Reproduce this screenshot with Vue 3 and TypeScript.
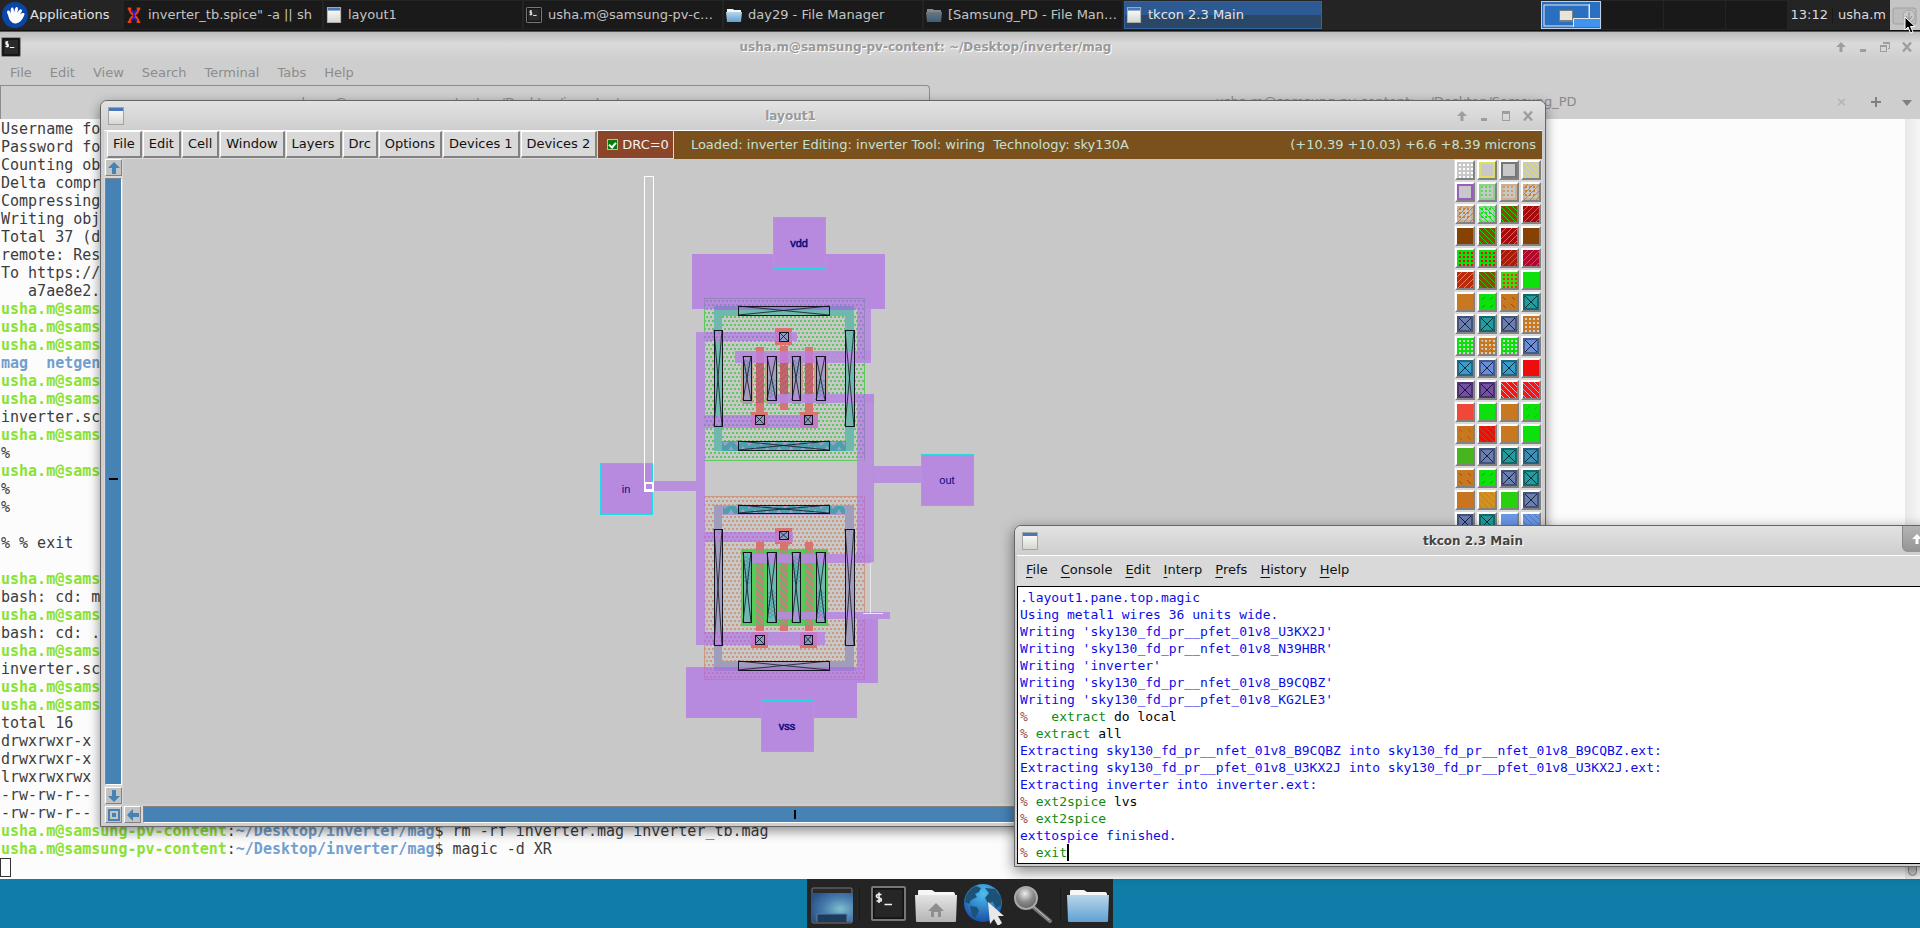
<script setup lang="ts">
interface Span { t: string; c?: string }
interface Swatch { base: string; kind: string; ink: string; frame: string }
interface Task { label: string; icon: string; state: string }

const prompt = 'usha.m@sams'
const host = 'usha.m@samsung-pv-content'
const cwd = '~/Desktop/inverter/mag'

const g = (t: string): Span[] => [{ t, c: 'user' }]
const p = (t: string): Span[] => [{ t }]
const cmd = (t: string): Span[] => [{ t: host, c: 'user' }, { t: ':' }, { t: cwd, c: 'path' }, { t: '$ ' + t }]

const termLines: Span[][] = [
  p('Username fo'), p('Password fo'), p('Counting ob'), p('Delta compr'), p('Compressing'),
  p('Writing obj'), p('Total 37 (d'), p('remote: Res'), p('To https://'), p('   a7ae8e2.'),
  g(prompt), g(prompt), g(prompt), [{ t: 'mag  netgen', c: 'path' }], g(prompt), g(prompt),
  p('inverter.sc'), g(prompt), p('%'), g(prompt), p('%'), p('%'), p(' '), p('% % exit'), p(' '),
  g(prompt), p('bash: cd: m'), g(prompt), p('bash: cd: .'), g(prompt), p('inverter.sc'),
  g(prompt), g(prompt), p('total 16'), p('drwxrwxr-x'), p('drwxrwxr-x'), p('lrwxrwxrwx'),
  p('-rw-rw-r--'), p('-rw-rw-r--'),
  cmd('rm -rf inverter.mag inverter_tb.mag'), cmd('magic -d XR'),
]

const out = (t: string): Span[] => [{ t, c: 'out' }]
const run = (word: string, rest = '', pad = ' '): Span[] => [{ t: '%', c: 'pct' }, { t: pad + word, c: 'cmd' }, { t: rest }]
const conLines: Span[][] = [
  out('.layout1.pane.top.magic'),
  out('Using metal1 wires 36 units wide.'),
  out("Writing 'sky130_fd_pr__pfet_01v8_U3KX2J'"),
  out("Writing 'sky130_fd_pr__nfet_01v8_N39HBR'"),
  out("Writing 'inverter'"),
  out("Writing 'sky130_fd_pr__nfet_01v8_B9CQBZ'"),
  out("Writing 'sky130_fd_pr__pfet_01v8_KG2LE3'"),
  run('extract', ' do local', '   '),
  run('extract', ' all'),
  out('Extracting sky130_fd_pr__nfet_01v8_B9CQBZ into sky130_fd_pr__nfet_01v8_B9CQBZ.ext:'),
  out('Extracting sky130_fd_pr__pfet_01v8_U3KX2J into sky130_fd_pr__pfet_01v8_U3KX2J.ext:'),
  out('Extracting inverter into inverter.ext:'),
  run('ext2spice', ' lvs'),
  run('ext2spice'),
  out('exttospice finished.'),
  run('exit'),
]

const tasks: Task[] = [
  { label: 'inverter_tb.spice" -a || sh', icon: 'i-xschem', state: '' },
  { label: 'layout1', icon: 'i-win', state: '' },
  { label: 'usha.m@samsung-pv-c…', icon: 'i-term', state: '' },
  { label: 'day29 - File Manager', icon: 'i-folder', state: '' },
  { label: '[Samsung_PD - File Man…', icon: 'i-folder', state: 'minimized' },
  { label: 'tkcon 2.3 Main', icon: 'i-win', state: 'active' },
]

const termMenu = ['File', 'Edit', 'View', 'Search', 'Terminal', 'Tabs', 'Help']
const magicMenu = ['File', 'Edit', 'Cell', 'Window', 'Layers', 'Drc', 'Options', 'Devices 1', 'Devices 2']
const conMenu = ['File', 'Console', 'Edit', 'Interp', 'Prefs', 'History', 'Help']

const dots = [0, 1, 2, 3].flatMap(r => [0, 1, 2, 3].map(c => `M${2 + c * 4} ${2 + r * 4}h2v2h-2z`)).join('')
const strokes: Record<string, string> = {
  fwd: 'M0 5L5 0M0 11L11 0M1 16L16 1M7 16L16 7M13 16L16 13',
  back: 'M11 0L16 5M5 0L16 11M0 1L15 16M0 7L9 16M0 13L3 16',
  dfwd: 'M3 6L6 3M11 6L14 3M3 14L6 11M11 14L14 11',
  dback: 'M2 3L5 6M11 3L14 6M2 11L5 14M10 10L14 14',
  x: 'M2 2L14 14M14 2L2 14',
}
const s = (base: string, kind = '', ink = '', frame = ''): Swatch => ({ base, kind, ink, frame })
const G = '#0de00d', O = '#c87820', R = '#ee0c0c', B = '#6a7fb0', T = '#229c9c', K = '#c8c8c8', W = '#854203'
const swatches: Swatch[] = [
  s(K, 'dots', '#fff'), s(K, '', '', '#dede66'), s(K, '', '', '#777'), s(K, 'back', '#e0dc6a'),
  s(K, '', '', '#9a5cc0'), s(K, 'dots', '#5cd85c', '#8fd08f'), s(K, 'dots', '#d09a60', '#ccb090'), s(K, 'dots fwd', '#cc8030', '#ccb090'),
  s(K, 'dots fwd', '#cc8030', '#ccb090'), s(K, 'dots back', '#0de01d', '#8fd08f'), s('#8c4806', 'back', G), s('#a60c0c', 'fwd', '#c86c20'),
  s(W), s('#8c4806', 'back', G), s('#a60c0c', 'fwd', '#d08020'), s(W),
  s(G, 'dots', R), s(G, 'dots dfwd', R), s('#a81c0c', 'fwd', '#c06420'), s('#b0082c', 'fwd', '#d0504c'),
  s('#b82c0c', 'fwd', '#e09020'), s('#8c4806', 'back', '#30c010'), s('#40d810', 'dots', '#f03010'), s(G),
  s(O), s(G, 'dfwd', '#806010'), s(O, 'dback', '#904c08'), s(T, 'x', '#0a2a34'),
  s(B, 'x', '#18203c'), s(T, 'x', '#0a2a34'), s(B, 'x', '#18203c'), s(O, 'dots', '#d4d0c8'),
  s(G, 'dots', '#d0d4d0'), s(O, 'dots dback', '#d4d0c8'), s(G, 'dots dfwd', '#d0d4d0'), s('#6a8fd8', 'x', '#18203c'),
  s('#3a9cc8', 'x', '#0a2a34'), s('#6a8fd8', 'x', '#18203c'), s('#3a9cc8', 'x', '#0a2a34'), s(R),
  s('#7450a0', 'x', '#20103c'), s('#7450a0', 'x', '#20103c'), s('#fa1410', 'back', '#d0b8c0'), s('#fa1410', 'back', '#b8a0c8'),
  s('#f04838'), s(G), s(O), s(G, 'dfwd', '#18b818'),
  s(O, 'dback', '#a86018'), s(R, 'back', '#c04820'), s(O), s(G),
  s('#48b420', 'fwd', '#20c818'), s(B, 'x', '#18203c'), s(T, 'x', '#0a2a34'), s('#3a90b8', 'x', '#0a2a34'),
  s(O, 'dback', '#904c08'), s(G, 'dfwd', '#806010'), s(B, 'x', '#18203c'), s(T, 'x', '#0a2a34'),
  s('#c87420'), s('#d49020', 'back', '#c08018'), s('#28d010'), s(B, 'x', '#18203c'),
  s(B, 'x', '#18203c'), s(T, 'x', '#0a2a34'), s('#6a98e8'), s('#6a98e8', 'back', '#5078c0'),
]
const strokeKind = (k: string): string => k.split(' ').filter(x => x !== 'dots').map(x => strokes[x] ?? '').join('')

type Box = [number, number, number, number]
const metal: Box[] = [
  [692, 254, 193, 55], [857, 309, 14, 51], [735, 351, 136, 12], [857, 394, 17, 168], [770, 394, 104, 9],
  [873, 466, 48, 17], [652, 481, 44, 10], [696, 332, 9, 313], [705, 332, 92, 9], [705, 415, 113, 13],
  [705, 532, 88, 10], [705, 632, 120, 13], [752, 554, 119, 9], [777, 612, 113, 7],
  [857, 619, 21, 64], [686, 667, 171, 51],
]
const nwellOver: Box[] = [[704, 298, 160, 11], [857, 309, 7, 51], [857, 394, 7, 66], [704, 332, 75, 9], [704, 415, 48, 13], [768, 415, 32, 13]]
const pwellOver: Box[] = [[704, 667, 160, 12], [857, 496, 7, 66], [857, 619, 7, 48], [704, 532, 72, 10], [704, 632, 48, 13]]
const contacts: Box[] = [
  [738, 306, 91, 9], [738, 441, 91, 9], [714, 330, 8, 96], [845, 330, 9, 96],
  [738, 505, 91, 8], [738, 661, 91, 9], [714, 529, 8, 116], [845, 529, 9, 116],
  [743, 356, 8, 44], [767, 356, 9, 44], [792, 356, 8, 44], [816, 356, 9, 44],
  [743, 552, 8, 70], [767, 552, 9, 70], [792, 552, 8, 70], [816, 552, 9, 70],
  [779, 332, 9, 9], [755, 415, 9, 9], [804, 415, 8, 9],
  [779, 531, 9, 8], [755, 635, 9, 9], [804, 635, 8, 9],
]
const poly: Box[] = [
  [756, 347, 8, 65], [780, 346, 8, 64], [805, 347, 8, 65], [775, 328, 17, 17], [751, 412, 17, 16], [800, 412, 18, 16],
  [756, 542, 8, 89], [780, 544, 8, 87], [805, 542, 8, 89], [775, 528, 17, 16], [751, 632, 17, 16], [800, 632, 17, 16],
]
const ports = [
  { name: 'vdd', x: 773, y: 217, bold: true }, { name: 'in', x: 600, y: 463, bold: false },
  { name: 'out', x: 921, y: 454, bold: false }, { name: 'vss', x: 761, y: 700, bold: true },
]
const cross = (b: Box): string => `M${b[0]} ${b[1]}l${b[2]} ${b[3]}M${b[0] + b[2]} ${b[1]}l${-b[2]} ${b[3]}`
</script>

<template>
  <div class="desktop">
    <svg class="defs" width="0" height="0" aria-hidden="true">
      <defs>
        <linearGradient id="g-folder" x1="0" y1="0" x2="0" y2="1"><stop offset="0" stop-color="#b9d6ea" /><stop offset="1" stop-color="#5fa0d2" /></linearGradient>
        <linearGradient id="g-home" x1="0" y1="0" x2="0" y2="1"><stop offset="0" stop-color="#e4e4e4" /><stop offset="1" stop-color="#b4b4b4" /></linearGradient>
        <linearGradient id="g-win" x1="0" y1="0" x2="0" y2="1"><stop offset="0" stop-color="#fff" /><stop offset="1" stop-color="#d4d8d0" /></linearGradient>
        <radialGradient id="g-desk" cx=".7" cy=".55" r=".75"><stop offset="0" stop-color="#7fc0cc" /><stop offset=".5" stop-color="#4a80b0" /><stop offset="1" stop-color="#2c5288" /></radialGradient>
        <radialGradient id="g-globe" cx=".5" cy=".25" r=".8"><stop offset="0" stop-color="#4cc0ee" /><stop offset="1" stop-color="#1746a0" /></radialGradient>
        <radialGradient id="g-lens" cx=".45" cy=".3" r=".75"><stop offset="0" stop-color="#ececec" /><stop offset=".5" stop-color="#8c8c8c" /><stop offset="1" stop-color="#5a5a5a" /></radialGradient>
        <pattern id="p-nwell" width="4" height="8" patternUnits="userSpaceOnUse"><path d="M0 0h2v2h-2zM2 4h2v2h-2z" fill="#5cc95c" /></pattern>
        <pattern id="p-pwell" width="4" height="8" patternUnits="userSpaceOnUse"><path d="M0 0h2v2h-2zM2 4h2v2h-2z" fill="#cc9880" /></pattern>
        <pattern id="p-nover" width="4" height="8" patternUnits="userSpaceOnUse"><path d="M0 0h2v2h-2zM2 4h2v2h-2z" fill="#9684be" /></pattern>
        <pattern id="p-pover" width="4" height="8" patternUnits="userSpaceOnUse"><path d="M0 0h2v2h-2zM2 4h2v2h-2z" fill="#b878c6" /></pattern>
        <pattern id="p-tri" x="722" y="1" width="12" height="9" patternUnits="userSpaceOnUse"><path d="M0 0h7l-4 4zM6 9l3-5 3 5z" fill="#a49cc8" /></pattern>
        <pattern id="p-hatch" width="6" height="6" patternUnits="userSpaceOnUse"><path d="M0 6L6 0" stroke="#c87850" /></pattern>
        <pattern id="p-hatchg" width="8" height="8" patternUnits="userSpaceOnUse"><path d="M0 0L8 8" stroke="#50c850" /></pattern>
        <pattern id="p-cut" width="6" height="4" patternUnits="userSpaceOnUse"><path d="M0 1h4M3 3h3" stroke="#3c98b0" /></pattern>
      </defs>
      <symbol id="i-win" viewBox="0 0 16 18"><rect width="16" height="18" fill="#a4a4a4" /><rect x="1" y="1" width="14" height="16" fill="url(#g-win)" /><rect x="1" y="1" width="14" height="3" fill="#4a76b8" /></symbol>
      <symbol id="i-term" viewBox="0 0 18 18"><rect x=".5" y=".5" width="17" height="17" rx="1" fill="#1c1c1c" stroke="#8c8c8c" /><rect x="2" y="2" width="14" height="14" fill="#2a2a2a" stroke="#111" /><path d="M6.500 4.500H4.500V6.500H6.500V8.500H4M5.500 3.500V9.500M8 9.500H12" fill="none" stroke="#fff" /></symbol>
      <symbol id="i-folder" viewBox="0 0 16 16"><path d="M1 5V2h6l1 1h7v3z" fill="#f4f4f4" /><path d="M0 5h16l-1 10H1z" fill="url(#g-folder)" /></symbol>
      <symbol id="i-xschem" viewBox="0 0 16 18"><path d="M1 2h4M1 17h4M11 2h4M11 17h4M3 2Q3 6 8 9.500T13 17M13 2Q13 6 8 9.500T3 17" fill="none" stroke="#f23c10" stroke-width="2.600" /><path d="M5 4L8 6L11 4M5 15L8 12L11 15M8 6v7" fill="none" stroke="#2020e0" stroke-width="2" /></symbol>
      <symbol id="i-up" viewBox="0 0 12 12"><path d="M6 1L11 6H7.500V11H4.500V6H1z" /></symbol>
      <symbol id="i-min" viewBox="0 0 12 12"><path d="M3 8h6v3H3z" /></symbol>
      <symbol id="i-max" viewBox="0 0 12 12"><path d="M2 1h8v10H2zM3 4v6h6V4z" fill-rule="evenodd" /></symbol>
      <symbol id="i-restore" viewBox="0 0 12 12"><path d="M1 4h7v7H1zM2 6v4h5V6zM4 1h7v7H9V7h1V3H5V3H4z" fill-rule="evenodd" /></symbol>
      <symbol id="i-close" viewBox="0 0 12 12"><path d="M2 1.500L10 10.500M10 1.500L2 10.500" fill="none" stroke="currentColor" stroke-width="2.400" /></symbol>
      <symbol id="i-arrow" viewBox="0 0 14 14"><path d="M7 1L13 7H9V13H5V7H1z" fill="#4682b4" /></symbol>
    </svg>

    <header class="panel">
      <button class="apps">
        <svg width="26" height="26" viewBox="0 0 26 26"><circle cx="13" cy="13" r="13" fill="#0b45a8" /><path d="M6 13Q4 9 6 8.500T9 12Q8 6 10 5.500T12 11Q13 4 15 5T15 11Q18 6 19.500 7.500T18 12Q23 10 22.500 12.500Q20 20 14 21.500Q8 22 6 13z" fill="#fff" /></svg>
        <span>Applications</span>
      </button>
      <nav class="tasks">
        <button v-for="t in tasks" :key="t.label" class="task" :class="t.state">
          <svg width="16" height="16"><use :href="'#' + t.icon" /></svg>
          <span>{{ t.label }}</span>
        </button>
      </nav>
      <div class="pager">
        <button class="ws current" aria-label="Workspace 1">
          <svg width="60" height="27" viewBox="0 0 60 27"><rect x="3" y="3" width="45" height="21" fill="#2b70c0" stroke="#e8e8e8" /><path d="M48.500 2V17H59" fill="none" stroke="#e8e8e8" /><rect x="32" y="16" width="27" height="9" fill="#4094ee" /><path d="M32.500 25V16.500H59" fill="none" stroke="#e8e8e8" /><rect x="18" y="8" width="14" height="12" fill="#7c8078" /><rect x="19" y="9" width="12" height="9" fill="#e4e6de" /></svg>
        </button>
        <button class="ws" aria-label="Workspace 2"></button>
        <button class="ws" aria-label="Workspace 3"></button>
        <button class="ws" aria-label="Workspace 4"></button>
      </div>
      <span class="clock">13:12</span>
      <span class="who">usha.m</span>
      <button class="shot" aria-label="Screenshot">
        <svg width="26" height="24" viewBox="0 0 26 24"><rect x="1" y="5" width="23" height="16" rx="2" fill="#bcbcbc" stroke="#a0a0a0" /><circle cx="17" cy="13" r="6" fill="#c8c8c8" stroke="#a4a4a4" /><path d="M17 9v7M14 13l3 4 3-4" stroke="#8c8c8c" fill="none" /></svg>
      </button>
    </header>
    <svg class="cursor" width="12" height="18" viewBox="0 0 12 18"><path d="M1 1V14L4 11L6.500 17L9 16L6.500 10.500H11z" fill="#000" stroke="#fff" /></svg>

    <section class="win terminal">
      <div class="titlebar">
        <svg class="ticon" width="20" height="20"><use href="#i-term" /></svg>
        <h1>usha.m@samsung-pv-content: ~/Desktop/inverter/mag</h1>
        <div class="wbtns">
          <button aria-label="Shade"><svg width="12" height="12"><use href="#i-up" /></svg></button>
          <button aria-label="Minimize"><svg width="12" height="12"><use href="#i-min" /></svg></button>
          <button aria-label="Restore"><svg width="12" height="12"><use href="#i-restore" /></svg></button>
          <button aria-label="Close"><svg width="12" height="12"><use href="#i-close" /></svg></button>
        </div>
      </div>
      <nav class="termmenu"><button v-for="m in termMenu" :key="m">{{ m }}</button></nav>
      <div class="tabs">
        <button class="tab on"><span>usha.m@samsung-pv-content: ~/Desktop/inverter/mag</span><i>×</i></button>
        <button class="tab"><span>usha.m@samsung-pv-content: ~/Desktop/Samsung_PD</span><i>×</i></button>
        <button class="tabtool wide" aria-label="New tab"><svg width="12" height="12"><path d="M6 1V11M1 6H11" stroke="#808080" stroke-width="2" /></svg></button>
        <button class="tabtool" aria-label="Tab list"><svg width="12" height="12"><path d="M1 4H11L6 10z" fill="#808080" /></svg></button>
      </div>
      <div class="termbody">
        <div class="termtext">
          <div v-for="(l, i) in termLines" :key="i" class="line"><span v-for="(x, j) in l" :key="j" :class="x.c">{{ x.t }}</span></div>
          <div class="caret"></div>
        </div>
        <div class="vbar"><div class="thumb"></div></div>
      </div>
    </section>

    <section class="win magic">
      <div class="titlebar">
        <svg class="ticon" width="20" height="18"><use href="#i-win" /></svg>
        <h1>layout1</h1>
        <div class="wbtns">
          <button aria-label="Shade"><svg width="12" height="12"><use href="#i-up" /></svg></button>
          <button aria-label="Minimize"><svg width="12" height="12"><use href="#i-min" /></svg></button>
          <button aria-label="Maximize"><svg width="12" height="12"><use href="#i-max" /></svg></button>
          <button aria-label="Close"><svg width="12" height="12"><use href="#i-close" /></svg></button>
        </div>
      </div>
      <div class="magicbar">
        <button v-for="m in magicMenu" :key="m" class="mbtn">{{ m }}</button>
        <label class="drc"><input type="checkbox" checked />DRC=0</label>
        <div class="status">
          <span>Loaded: inverter Editing: inverter Tool: wiring&nbsp; Technology: sky130A</span>
          <span>(+10.39 +10.03) +6.6 +8.39 microns</span>
        </div>
      </div>
      <div class="magicmain">
        <div class="vscroll">
          <button class="sbtn" aria-label="Scroll up"><svg width="14" height="14"><use href="#i-arrow" /></svg></button>
          <div class="trough"><span class="vmark"></span></div>
          <button class="sbtn down" aria-label="Scroll down"><svg width="14" height="14"><use href="#i-arrow" /></svg></button>
        </div>
        <div class="canvas">
          <svg width="100%" height="100%">
            <g transform="translate(-123 -159)" shape-rendering="crispEdges">
              <rect x="704" y="298" width="160" height="162" fill="url(#p-nwell)" stroke="#5cc95c" />
              <rect x="704" y="496" width="160" height="183" fill="url(#p-pwell)" stroke="#cc9880" />
              <path d="M714 306h140v145h-140zM722 316v125h123V316z" fill="#6fb8ae" fill-rule="evenodd" />
              <rect x="722" y="441" width="123" height="9" fill="#4aa0ac" /><rect x="722" y="441" width="123" height="9" fill="url(#p-tri)" stroke="#4aa0ac" />
              <path d="M714 505h140v166h-140zM722 514v147h123V514z" fill="#9f9cbc" fill-rule="evenodd" />
              <rect x="722" y="505" width="123" height="9" fill="#4aa0ac" /><rect x="722" y="505" width="123" height="9" fill="url(#p-tri)" stroke="#ae98d0" />
              <g fill="#c4a088"><rect x="741" y="353" width="12" height="50" /><rect x="765" y="353" width="13" height="50" /><rect x="790" y="353" width="13" height="50" /><rect x="814" y="353" width="14" height="50" /></g>
              <rect x="741" y="549" width="87" height="77" fill="#55cc55" />
              <g fill="#6fb8ae"><rect x="743" y="552" width="9" height="71" /><rect x="767" y="552" width="10" height="71" /><rect x="792" y="552" width="9" height="71" /><rect x="816" y="552" width="10" height="71" /></g>
              <g fill="#a39cbc"><rect x="743" y="356" width="9" height="48" /><rect x="767" y="356" width="10" height="48" /><rect x="792" y="356" width="9" height="48" /><rect x="816" y="356" width="10" height="48" /></g>
              <rect v-for="(b, i) in poly" :key="'p' + i" :x="b[0]" :y="b[1]" :width="b[2]" :height="b[3]" fill="#d87470" />
              <g fill="#bc6068"><rect x="756" y="363" width="8" height="40" /><rect x="780" y="363" width="8" height="40" /><rect x="805" y="363" width="8" height="40" /></g>
              <g fill="url(#p-hatch)"><rect x="755" y="363" width="9" height="40" /><rect x="779" y="363" width="10" height="40" /><rect x="804" y="363" width="9" height="40" /></g>
              <g fill="#b58a78"><rect x="756" y="550" width="8" height="75" /><rect x="780" y="550" width="8" height="75" /><rect x="805" y="550" width="8" height="75" /></g>
              <g fill="url(#p-hatchg)"><rect x="755" y="550" width="10" height="75" /><rect x="779" y="550" width="10" height="75" /><rect x="804" y="550" width="10" height="75" /></g>
              <rect v-for="(b, i) in metal" :key="'m' + i" :x="b[0]" :y="b[1]" :width="b[2]" :height="b[3]" fill="#b78ae0" :fill-opacity="i === 0 || i > 13 ? 1 : 0.9" />
              <rect v-for="(b, i) in nwellOver" :key="'n' + i" :x="b[0]" :y="b[1]" :width="b[2]" :height="b[3]" fill="url(#p-nover)" />
              <rect v-for="(b, i) in pwellOver" :key="'w' + i" :x="b[0]" :y="b[1]" :width="b[2]" :height="b[3]" fill="url(#p-pover)" />
              <path d="M704 309V298H864V360M864 394V460" fill="none" stroke="#9684be" />
              <path d="M704 667V679H864V619M864 562V496" fill="none" stroke="#b878c6" />
              <rect x="714" y="306" width="140" height="4" fill="#9080d0" /><rect x="714" y="667" width="140" height="4" fill="#a47cd8" />
              <g fill="#d070c0" opacity=".5"><rect x="751" y="415" width="17" height="13" /><rect x="800" y="415" width="18" height="13" /><rect x="775" y="332" width="17" height="9" /><rect x="775" y="532" width="17" height="10" /><rect x="751" y="632" width="17" height="13" /><rect x="800" y="632" width="17" height="13" /><rect x="756" y="351" width="8" height="12" /><rect x="780" y="351" width="8" height="12" /><rect x="805" y="351" width="8" height="12" /></g>
              <g fill="#8c98c4"><rect x="779" y="332" width="9" height="9" /><rect x="755" y="415" width="9" height="9" /><rect x="804" y="415" width="9" height="9" /><rect x="779" y="531" width="9" height="9" /><rect x="755" y="635" width="9" height="9" /><rect x="804" y="635" width="9" height="9" /></g>
              <g fill="url(#p-cut)"><rect x="743" y="360" width="9" height="18" /><rect x="767" y="378" width="10" height="20" /><rect x="792" y="360" width="9" height="18" /><rect x="816" y="378" width="10" height="20" /><rect x="743" y="556" width="9" height="28" /><rect x="792" y="556" width="9" height="28" /><rect x="767" y="590" width="10" height="28" /><rect x="816" y="590" width="10" height="28" /></g>
              <g fill="none" stroke="#141420">
                <rect v-for="(b, i) in contacts" :key="'c' + i" :x="b[0]" :y="b[1]" :width="b[2]" :height="b[3]" />
                <path v-for="(b, i) in contacts" :key="'x' + i" :d="cross(b)" shape-rendering="auto" stroke-width=".8" />
              </g>
              <path d="M870 563V613M863 613H883" fill="none" stroke="#e8e8e8" />
              <g v-for="q in ports" :key="q.name">
                <rect :x="q.x" :y="q.y" width="52" height="51" fill="#b78ae0" stroke="#22dce4" />
                <text :x="q.x + 26" :y="q.y + 30" text-anchor="middle" class="port" :class="{ strong: q.bold }">{{ q.name }}</text>
              </g>
              <rect x="644" y="176" width="9" height="315" fill="none" stroke="#fff" />
              <rect x="645" y="483" width="8" height="7" fill="#b78ae0" stroke="#fff" stroke-width="2" />
            </g>
          </svg>
        </div>
        <div class="palette">
          <button v-for="(w, i) in swatches" :key="i" class="swatch" :aria-label="'Layer ' + (i + 1)">
            <svg width="16" height="16" viewBox="0 0 16 16" shape-rendering="crispEdges">
              <rect width="16" height="16" :fill="w.base" />
              <path v-if="w.kind.includes('dots')" :d="dots" :fill="w.ink" />
              <path v-if="w.kind === 'x'" d="M1 1V15H15V1z" fill="none" :stroke="w.ink" stroke-width="2" opacity=".45" />
              <path v-if="w.frame" d="M1 1H15V15H1z" fill="none" :stroke="w.frame" stroke-width="2" />
              <path :d="strokeKind(w.kind)" fill="none" :stroke="w.kind === 'dots dfwd' || w.kind === 'dots dback' ? '#a07030' : w.ink" />
            </svg>
          </button>
        </div>
      </div>
      <div class="hscroll">
        <button class="sbtn" aria-label="Zoom view"><svg width="14" height="14"><path d="M2 2H12V12H2z" fill="none" stroke="#4682b4" stroke-width="2" /><rect x="5" y="5" width="4" height="4" fill="#4682b4" /></svg></button>
        <button class="sbtn left" aria-label="Scroll left"><svg width="14" height="14"><use href="#i-arrow" /></svg></button>
        <div class="trough"><span class="hmark"></span></div>
      </div>
    </section>

    <section class="win tkcon">
      <div class="titlebar focus">
        <svg class="ticon" width="20" height="18"><use href="#i-win" /></svg>
        <h1>tkcon 2.3 Main</h1>
        <div class="wbtns hot">
          <button aria-label="Shade"><svg width="12" height="12"><use href="#i-up" /></svg></button>
          <button aria-label="Minimize"><svg width="12" height="12"><use href="#i-min" /></svg></button>
          <button aria-label="Maximize"><svg width="12" height="12"><use href="#i-max" /></svg></button>
          <button aria-label="Close"><svg width="12" height="12"><use href="#i-close" /></svg></button>
        </div>
      </div>
      <nav class="conmenu"><button v-for="m in conMenu" :key="m"><u>{{ m[0] }}</u>{{ m.slice(1) }}</button></nav>
      <div class="conbody">
        <div v-for="(l, i) in conLines" :key="i" class="cline"><span v-for="(x, j) in l" :key="j" :class="x.c">{{ x.t }}</span><span v-if="i === conLines.length - 1" class="insert"></span></div>
      </div>
    </section>

    <footer class="dock">
      <button aria-label="Show desktop"><svg width="42" height="42" viewBox="0 0 42 42"><rect x="1" y="5" width="40" height="35" rx="1" fill="#2a2a2a" stroke="#777" /><rect x="0" y="10" width="42" height="29" rx="1" fill="url(#g-desk)" /><path d="M6 39V31H36V39" fill="#1e3a5c" stroke="#5580a4" /></svg></button>
      <span class="dsep"></span>
      <button aria-label="Terminal"><svg width="42" height="42" viewBox="0 0 42 42"><rect x="5" y="4" width="33" height="33" rx="1" fill="#1a1a1a" stroke="#777" stroke-width="2" /><rect x="7" y="6" width="29" height="29" fill="#262626" stroke="#0c0c0c" /><path d="M14.500 11.500H11Q9 12 9.500 13.500T12.500 15.200T14 18H9.500M12 9.500V20M17.500 21.500H25" fill="none" stroke="#f4f4f4" stroke-width="1.600" /></svg></button>
      <button aria-label="Home folder"><svg width="42" height="42" viewBox="0 0 42 42"><path d="M3 12V8Q3 7 4 7H17L20 9H38Q40 9 40 11V13z" fill="#f6f6f6" /><path d="M0 12H42L41 38Q41 39 40 39H2Q1 39 1 38z" fill="url(#g-home)" /><path d="M21 20L29 28H26V34H23V29H19V34H16V28H13z" fill="#8e8e8e" /></svg></button>
      <button aria-label="Web browser"><svg width="42" height="42" viewBox="0 0 42 42"><circle cx="20" cy="20" r="19" fill="url(#g-globe)" /><path d="M3 13Q7 5 13 3L18 5L16 9L12 11L14 14L8 17L6 21L2 19zM7 23L14 24L16 28L12 35L9 32zM22 5L32 6L38 14V22L33 25L30 19L25 20L22 15L26 10z" fill="#1b5276" /><path d="M25 19L27 41L31 36L35 43L39 40L35 33L41 33z" fill="#e8e8e8" /></svg></button>
      <button aria-label="Application finder"><svg width="42" height="42" viewBox="0 0 42 42"><path d="M21 23L39 38" stroke="#777" stroke-width="4" stroke-linecap="round" /><path d="M22 23L38 37" stroke="#c4c4c4" stroke-width="1" /><circle cx="15" cy="15" r="11" fill="url(#g-lens)" stroke="#a8a8a8" stroke-width="2" /></svg></button>
      <span class="dsep"></span>
      <button aria-label="Files"><svg width="42" height="42" viewBox="0 0 42 42"><path d="M3 12V8Q3 7 4 7H17L20 9H38Q40 9 40 11V13z" fill="#f6f6f6" /><path d="M0 12H42L41 38Q41 39 40 39H2Q1 39 1 38z" fill="url(#g-folder)" /></svg></button>
    </footer>
  </div>
</template>

<style>
html, body { margin: 0; height: 100%; overflow: hidden; }
#app { height: 100%; }
</style>

<style scoped>
.desktop { position: relative; height: 100vh; overflow: hidden; display: flex; flex-direction: column; background: #0e7da8; font: 13px/16px "DejaVu Sans", "Liberation Sans", sans-serif; }
.defs { position: absolute; }
svg { display: block; flex: none; }
button { font: inherit; color: inherit; background: none; border: 0; padding: 0; margin: 0; cursor: default; text-align: left; }
h1 { margin: 0; }

.panel { display: flex; align-items: center; height: 31px; flex: none; background: #242424; color: #c4c4c4; border-bottom: 1px solid #101010; box-sizing: border-box; z-index: 1; }
.apps { display: flex; align-items: center; gap: 2px; width: 122px; padding-left: 2px; color: #e2e2e2; box-sizing: border-box; }
.tasks { display: flex; gap: 2px; padding-left: 2px; flex: 1; min-width: 0; }
.task { display: flex; align-items: center; gap: 6px; width: 198px; height: 28px; padding: 0 0 0 2px; background: #1a1a1a; box-sizing: border-box; }
.task span { white-space: nowrap; }
.task.minimized svg { opacity: .5; }
.task.active { background: linear-gradient(#2d5a92 50%, #2a4768 50%); color: #e6e6e6; outline: 1px solid #33649c; outline-offset: -1px; }
.pager { display: flex; gap: 1px; }
.ws { width: 61px; height: 28px; background: #191919; }
.ws.current { background: #2b70c0; outline: 1px solid #b8d0ec; outline-offset: -1px; width: 60px; }
.clock { padding: 0 4px; border-right: 1px solid #181818; color: #dcdcdc; }
.who { padding: 0 4px 0 5px; color: #dcdcdc; }
.shot { width: 30px; height: 30px; background: #c4c4c4; display: flex; align-items: center; justify-content: center; }
.cursor { position: absolute; right: 4px; top: 16px; z-index: 9; }

.win { background: #cecece; display: flex; flex-direction: column; box-sizing: border-box; }
.titlebar { display: flex; align-items: center; flex: none; color: #999; background: linear-gradient(#e2e2e2, #cecece); }
.titlebar h1 { flex: 1; text-align: center; font-size: 12px; line-height: 16px; font-weight: bold; text-shadow: 1px 1px 0 #fff; }
.wbtns { display: flex; color: #9e9e9e; fill: currentColor; }
.wbtns button { width: 22px; height: 20px; display: flex; align-items: center; justify-content: center; }

.terminal { flex: none; height: calc(100% - 80px); border-top: 1px solid #555; }
.terminal .titlebar { height: 29px; padding: 0 2px 0 1px; background: linear-gradient(#bcbcbc, #dadada 40%, #cecece); }
.termmenu { display: flex; gap: 18px; padding: 4px 10px; color: #8c8c8c; }
.tabs { display: flex; height: 34px; color: #8a8a8a; flex: none; }
.tab { flex: 1; display: flex; align-items: center; padding-left: 26px; box-sizing: border-box; }
.tab.on { border: 1px solid #8c8c8c; border-bottom: 0; border-radius: 0 4px 0 0; }
.tab span { flex: 1; text-align: center; }
.tab i { width: 22px; font-style: normal; font-weight: bold; color: #b4b4b4; }
.tabtool { width: 26px; display: flex; align-items: center; justify-content: center; }
.tabtool.wide { width: 36px; }
.termbody { flex: 1; display: flex; background: #fcfcfc; min-height: 0; }
.termtext { flex: 1; padding: 1px; font: 15px/18px "DejaVu Sans Mono", "Liberation Mono", monospace; color: #3c3c3c; white-space: pre; }
.line { height: 18px; }
.user { color: #8ae234; font-weight: bold; }
.path { color: #729fcf; font-weight: bold; }
.caret { width: 11px; height: 19px; border: 1px solid #333; margin-left: -1px; box-sizing: border-box; }
.vbar { width: 15px; background: linear-gradient(90deg, #e8e8e8, #f6f6f6); display: flex; align-items: flex-end; padding: 3px; box-sizing: border-box; }
.thumb { flex: 1; height: 70px; border: 1px solid #8c8c8c; border-radius: 5px; background: #d0d0d0; }

.magic { position: absolute; left: 100px; right: 374px; top: 100px; bottom: 101px; border: 1px solid #666; border-radius: 7px 7px 0 0; box-shadow: 0 4px 12px rgba(0,0,0,.45); }
.magic .titlebar { height: 29px; padding: 0 6px 0 5px; border-radius: 6px 6px 0 0; }
.magic h1, .tkcon h1 { padding-left: 4px; }
.magicbar { display: flex; margin: 0 3px; padding-left: 2px; flex: none; height: 29px; box-sizing: border-box; background: #d9d9d9; border-top: 1px solid #fff; align-items: stretch; }
.mbtn { padding: 0 5px; margin: 0 0 1px 1px; border: solid; border-color: #fff #828282 #828282 #fff; border-width: 1px 2px 2px 1px; background: #d9d9d9; color: #111; white-space: nowrap; }
.drc { display: flex; align-items: center; gap: 4px; padding: 0 4px 0 9px; margin: 0 1px 1px; background: #8b4528; color: #f2f2f2; white-space: nowrap; }
.drc input { appearance: none; width: 11px; height: 11px; margin: 0; border: 1px solid #c8b8a8; background: #0a7a10; display: grid; place-items: center; box-sizing: border-box; }
.drc input::before { content: ""; width: 3px; height: 5px; border: solid #fff; border-width: 0 2px 2px 0; transform: rotate(40deg); }
.status { flex: 1; display: flex; justify-content: space-between; align-items: center; padding: 0 6px 0 17px; background: #7a501c; color: #c2e2d8; white-space: nowrap; }
.magicmain { flex: 1; display: flex; margin: 0 3px; min-height: 0; }
.vscroll { width: 19px; display: flex; flex-direction: column; gap: 2px; padding: 0 1px; box-sizing: border-box; background: #d9d9d9; }
.sbtn { width: 17px; height: 17px; flex: none; background: #c3c3c3; border: solid; border-width: 1px; border-color: #fff #828282 #828282 #fff; display: flex; align-items: center; justify-content: center; box-sizing: border-box; }
.sbtn.down svg { transform: rotate(180deg); }
.sbtn.left svg { transform: rotate(-90deg); }
.trough { flex: 1; background: #4682b4; display: flex; align-items: center; border: solid; border-width: 1px; border-color: #828282 #fff #fff #828282; box-sizing: border-box; }
.vscroll .trough { justify-content: center; }
.vmark { width: 9px; height: 2px; margin-bottom: 5px; background: #000; }
.hmark { width: 2px; height: 9px; margin-left: 46.5%; background: #000; }
.canvas { flex: 1; background: #c8c8c8; overflow: hidden; min-width: 0; }
.port { font: 11px "Liberation Sans", Arial, sans-serif; fill: #0a0a78; }
.port.strong { stroke: #0a0a78; stroke-width: .5px; }
.palette { width: 88px; display: grid; grid-template-columns: repeat(4, 22px); grid-auto-rows: 22px; background: #d9d9d9; align-content: start; padding-top: 1px; box-sizing: border-box; }
.swatch { width: 20px; height: 20px; margin: 0 1px; border: 2px solid; border-color: #fff #828282 #828282 #fff; box-sizing: border-box; }
.hscroll { display: flex; gap: 2px; height: 17px; margin: 2px 3px 3px; padding-left: 1px; flex: none; background: #d9d9d9; }

.tkcon { position: absolute; left: 1014px; width: 983px; top: 525px; bottom: 61px; border: 1px solid #666; border-radius: 7px 7px 0 0; box-shadow: 0 4px 14px rgba(0,0,0,.5); }
.tkcon .titlebar { height: 29px; padding-left: 5px; border-radius: 6px 6px 0 0; color: #444; }
.wbtns.hot { background: linear-gradient(#b4b4b4, #949494); color: #fff; padding: 0 2px 0 3px; height: 26px; margin-bottom: 3px; align-items: center; border-left: 1px solid #888; border-radius: 0 0 0 6px; }
.conmenu { display: flex; gap: 13px; padding: 6px 8px 8px 9px; margin: 0 2px; border-top: 1px solid #fff; background: #d9d9d9; color: #111; }
.conmenu u { text-underline-offset: 3px; }
.conbody { flex: 1; margin: 0 2px 2px; border: 1px solid #000; padding: 2px; background: #fff; font: 13px/17px "DejaVu Sans Mono", "Liberation Mono", monospace; color: #000; white-space: pre; }
.cline { height: 17px; display: flex; }
.out { color: #0c0ce8; }
.pct { color: #a05048; }
.cmd { color: #108a10; }
.insert { width: 2px; background: #000; }

.dock { position: absolute; left: 50%; bottom: 0; margin-left: -153px; width: 306px; height: 49px; background: #242424; display: flex; align-items: center; justify-content: space-between; padding: 0 4px; box-sizing: border-box; }
.dsep { width: 1px; height: 32px; background: #1a1a1a; }
</style>
